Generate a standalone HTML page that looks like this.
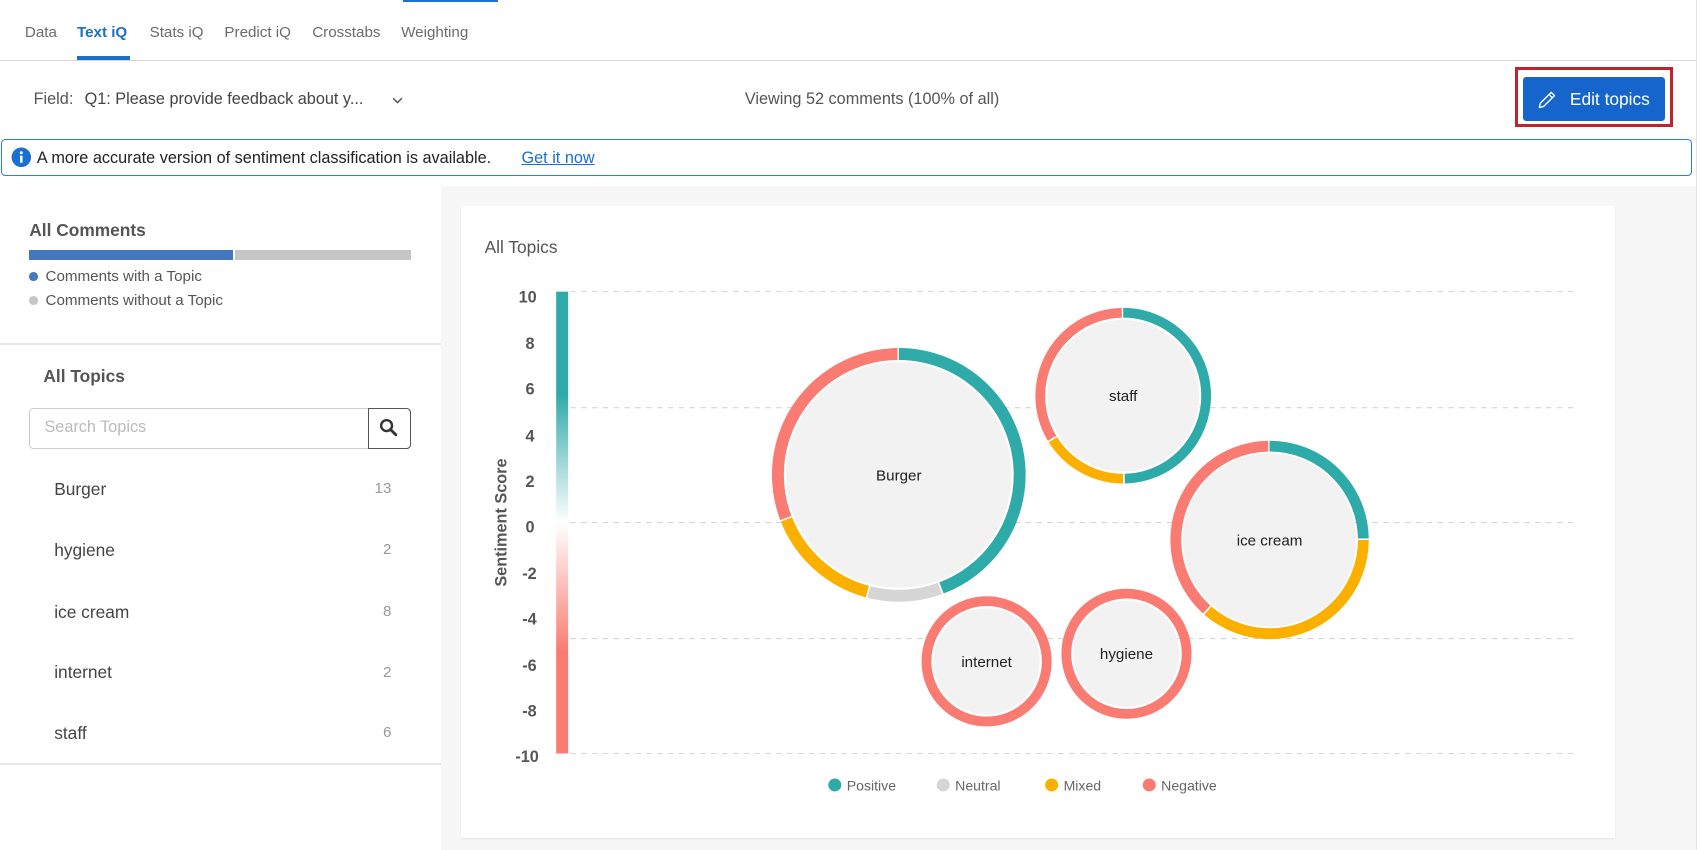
<!DOCTYPE html>
<html><head><meta charset="utf-8"><style>
html,body{margin:0;padding:0;background:#fff;overflow:hidden}
body{width:1700px;height:850px}
#w{position:relative;width:1568px;height:784px;zoom:1.08418;font-family:"Liberation Sans",sans-serif;color:#333}
.a{position:absolute;white-space:nowrap}
.tab{position:absolute;top:22px;font-size:14px;color:#6b6b6b}
.item{position:absolute;left:50px;font-size:16px;color:#444}
.cnt{position:absolute;right:0;font-size:14px;color:#999}
</style></head><body><div id="w">
<div class="a" style="left:372px;top:0;width:87px;height:2px;background:#1a73d4"></div>
<div class="tab" style="left:23px">Data</div>
<div class="tab" style="left:71px;color:#1a6fc9;font-weight:bold">Text iQ</div>
<div class="a" style="left:71px;top:52px;width:49px;height:3px;background:#1a6fc9"></div>
<div class="tab" style="left:138px">Stats iQ</div>
<div class="tab" style="left:207px">Predict iQ</div>
<div class="tab" style="left:288px">Crosstabs</div>
<div class="tab" style="left:370px">Weighting</div>
<div class="a" style="left:0;top:55px;width:1564px;height:1px;background:#d6d6d6"></div>
<div class="a" style="left:1564px;top:0;width:1px;height:784px;background:#e4e4e4"></div>
<div class="a" style="left:31px;top:83px;font-size:15px;color:#555">Field:</div>
<div class="a" style="left:78px;top:83px;font-size:15px;color:#444">Q1: Please provide feedback about y...</div>
<svg class="a" style="left:361px;top:88px" width="12" height="10"><path d="M2 3l4 4 4-4" fill="none" stroke="#555" stroke-width="1.4"/></svg>
<div class="a" style="left:687px;top:83px;font-size:15px;color:#555">Viewing 52 comments (100% of all)</div>
<div class="a" style="left:1397px;top:62px;width:146px;height:55px;box-sizing:border-box;border:3px solid #c0232f"></div>
<div class="a" style="left:1405px;top:71px;width:131px;height:41px;background:#1565cc;border-radius:3px"></div>
<svg class="a" style="left:1416px;top:81px" width="22" height="22" viewBox="0 0 22 22"><path d="M4 18l1-4L15 4l3 3L8 17zM13 6l3 3" fill="none" stroke="#fff" stroke-width="1.3" stroke-linejoin="round"/></svg>
<div class="a" style="left:1448px;top:82px;font-size:16px;color:#fff">Edit topics</div>
<div class="a" style="left:1px;top:128px;width:1560px;height:34px;box-sizing:border-box;border:1.5px solid #2a7de1;border-radius:4px"></div>
<svg class="a" style="left:10px;top:136px" width="19" height="19"><circle cx="9.5" cy="9.5" r="9" fill="#1a6fd0"/><rect x="8.3" y="8" width="2.4" height="6.5" fill="#fff"/><circle cx="9.5" cy="5.3" r="1.4" fill="#fff"/></svg>
<div class="a" style="left:34px;top:137px;font-size:15px;color:#222">A more accurate version of sentiment classification is available.</div>
<div class="a" style="left:481px;top:137px;font-size:15px;color:#1a6fd0;text-decoration:underline">Get it now</div>
<div class="a" style="left:407px;top:172px;width:1157px;height:612px;background:#f7f7f7"></div>
<div class="a" style="left:425px;top:190px;width:1065px;height:583px;background:#fff;box-shadow:0 1px 2px rgba(0,0,0,.08)"></div>
<div class="a" style="left:27px;top:203px;font-size:16px;font-weight:bold;color:#555">All Comments</div>
<div class="a" style="left:27px;top:231px;width:188px;height:9px;background:#4477c0"></div>
<div class="a" style="left:217px;top:231px;width:162px;height:9px;background:#c6c6c6"></div>
<div class="a" style="left:27px;top:251px;width:8px;height:8px;border-radius:50%;background:#4477c0"></div>
<div class="a" style="left:42px;top:247px;font-size:14px;color:#555">Comments with a Topic</div>
<div class="a" style="left:27px;top:273px;width:8px;height:8px;border-radius:50%;background:#c6c6c6"></div>
<div class="a" style="left:42px;top:269px;font-size:14px;color:#555">Comments without a Topic</div>
<div class="a" style="left:0;top:316px;width:407px;height:2px;background:#e6e6e6"></div>
<div class="a" style="left:40px;top:338px;font-size:16px;font-weight:bold;color:#555">All Topics</div>
<div class="a" style="left:27px;top:376px;width:352px;height:38px;box-sizing:border-box;border:1px solid #ccc;border-radius:4px"></div>
<div class="a" style="left:41px;top:386px;font-size:15px;color:#bbb">Search Topics</div>
<div class="a" style="left:339px;top:376px;width:40px;height:38px;box-sizing:border-box;border:1px solid #555;border-radius:0 4px 4px 0"></div>
<svg class="a" style="left:350px;top:386px" width="18" height="18"><circle cx="7" cy="7" r="5" fill="none" stroke="#333" stroke-width="2.2"/><path d="M10.5 10.5l5 5" stroke="#333" stroke-width="2.6" stroke-linecap="round"/></svg>
<div class="a" style="left:0;top:442px;width:361px;height:270px">
<div class="item" style="top:0">Burger</div><div class="cnt" style="top:1px">13</div>
<div class="item" style="top:56px">hygiene</div><div class="cnt" style="top:57px">2</div>
<div class="item" style="top:113px">ice cream</div><div class="cnt" style="top:114px">8</div>
<div class="item" style="top:169px">internet</div><div class="cnt" style="top:170px">2</div>
<div class="item" style="top:225px">staff</div><div class="cnt" style="top:226px">6</div>
</div>
<div class="a" style="left:0;top:704px;width:407px;height:2px;background:#e6e6e6"></div>
<div class="a" style="left:447px;top:219px;font-size:16px;color:#555">All Topics</div>
<svg class="a" style="left:0;top:0" width="1568" height="784" font-family="Liberation Sans, sans-serif">
<defs><linearGradient id="g" x1="0" y1="0" x2="0" y2="1">
<stop offset="0" stop-color="#2eaaa8"/><stop offset=".22" stop-color="#2eaaa8"/><stop offset=".5" stop-color="#fff"/><stop offset=".78" stop-color="#f97b72"/><stop offset="1" stop-color="#f97b72"/></linearGradient></defs>
<g stroke="#d4d4d4" stroke-dasharray="5 5" stroke-width="1">
<line x1="526" y1="269" x2="1455" y2="269"/><line x1="526" y1="376" x2="1455" y2="376"/><line x1="526" y1="482" x2="1455" y2="482"/><line x1="526" y1="589" x2="1455" y2="589"/><line x1="526" y1="695" x2="1455" y2="695"/></g>
<rect x="513" y="269" width="11" height="426" fill="url(#g)"/>
<g font-size="15" font-weight="bold" fill="#555" text-anchor="end">
<text x="495" y="279">10</text><text x="493" y="322">8</text><text x="493" y="364">6</text><text x="493" y="407">4</text><text x="493" y="449">2</text><text x="493" y="491">0</text><text x="495" y="534">-2</text><text x="495" y="576">-4</text><text x="495" y="619">-6</text><text x="495" y="661">-8</text><text x="497" y="703">-10</text></g>
<text transform="translate(467,482) rotate(-90)" font-size="15" font-weight="bold" fill="#555" text-anchor="middle">Sentiment Score</text>
<g fill="none" stroke-width="11">
<g transform="translate(829,438) rotate(-90)">
<circle r="111.5" stroke="#2eaaa8" stroke-dasharray="309.9 700" stroke-dashoffset="0"/>
<circle r="111.5" stroke="#d6d6d6" stroke-dasharray="66.6 700" stroke-dashoffset="-311.4"/>
<circle r="111.5" stroke="#fbb000" stroke-dasharray="103.6 700" stroke-dashoffset="-379.5"/>
<circle r="111.5" stroke="#f97b72" stroke-dasharray="214.5 700" stroke-dashoffset="-484.6"/>
</g>
<g transform="translate(1036,365) rotate(-90)" stroke-width="9">
<circle r="76.5" stroke="#2eaaa8" stroke-dasharray="238.8 490"/>
<circle r="76.5" stroke="#fbb000" stroke-dasharray="77.3 490" stroke-dashoffset="-240.3"/>
<circle r="76.5" stroke="#f97b72" stroke-dasharray="160.1 490" stroke-dashoffset="-319.1"/>
</g>
<g transform="translate(1171,498) rotate(-90)" stroke-width="10">
<circle r="86.5" stroke="#2eaaa8" stroke-dasharray="134.4 550"/>
<circle r="86.5" stroke="#fbb000" stroke-dasharray="197.8 550" stroke-dashoffset="-135.9"/>
<circle r="86.5" stroke="#f97b72" stroke-dasharray="206.9 550" stroke-dashoffset="-335.2"/>
</g>
<circle cx="910" cy="610" r="55.5" stroke="#f97b72" stroke-width="9"/>
<circle cx="1039" cy="603" r="55.5" stroke="#f97b72" stroke-width="9"/>
</g>
<g fill="#f2f2f2">
<circle cx="829" cy="438" r="104"/><circle cx="1036" cy="365" r="70"/><circle cx="1171" cy="498" r="80"/><circle cx="910" cy="610" r="49"/><circle cx="1039" cy="603" r="49"/></g>
<g font-size="14" fill="#222" text-anchor="middle">
<text x="829" y="443">Burger</text><text x="1036" y="370">staff</text><text x="1171" y="503">ice cream</text><text x="910" y="615">internet</text><text x="1039" y="608">hygiene</text></g>
<g font-size="13" fill="#666">
<circle cx="770" cy="724" r="6" fill="#2eaaa8"/><text x="781" y="729">Positive</text>
<circle cx="870" cy="724" r="6" fill="#d6d6d6"/><text x="881" y="729">Neutral</text>
<circle cx="970" cy="724" r="6" fill="#fbb000"/><text x="981" y="729">Mixed</text>
<circle cx="1060" cy="724" r="6" fill="#f97b72"/><text x="1071" y="729">Negative</text></g>
</svg>
</div></body></html>
